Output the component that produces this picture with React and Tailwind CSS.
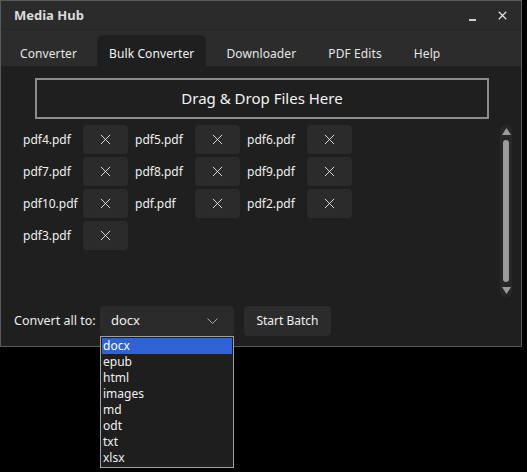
import React, { useState } from 'react';

const FILES = [
  'pdf4.pdf', 'pdf5.pdf', 'pdf6.pdf',
  'pdf7.pdf', 'pdf8.pdf', 'pdf9.pdf',
  'pdf10.pdf', 'pdf.pdf', 'pdf2.pdf',
  'pdf3.pdf',
];

const TABS = ['Converter', 'Bulk Converter', 'Downloader', 'PDF Edits', 'Help'];
const FORMATS = ['docx', 'epub', 'html', 'images', 'md', 'odt', 'txt', 'xlsx'];

const font = { fontFamily: '"Noto Sans", "Open Sans", sans-serif' };

const XIcon = ({ size = 12, stroke = 1 }) => (
  <svg width={size} height={size} viewBox="0 0 12 12">
    <path d="M1 1L11 11M11 1L1 11" stroke="#e8e8e8" strokeWidth={stroke} fill="none" />
  </svg>
);

const App = () => {
  const [files, setFiles] = useState(FILES);
  const [format, setFormat] = useState('docx');
  const [activeTab, setActiveTab] = useState('Bulk Converter');

  return (
    <div className="w-[527px] h-[472px] bg-black relative overflow-hidden text-[#ececec]" style={font}>
      {/* Window frame */}
      <div className="w-[522px] h-[347px] border border-[#5a5a5a] bg-[#1f1f1f] flex flex-col">
        {/* Title bar */}
        <div className="h-[28px] bg-[#2b2b2b] flex items-center pl-[13px] pr-[14px] shrink-0">
          <span className="text-[13px] font-bold text-[#dcdcdc] mt-[2px]">Media Hub</span>
          <div className="ml-auto flex items-center gap-[22px]">
            <div className="w-[7px] h-[2px] bg-[#cfcfcf] mt-[9px]" />
            <XIcon size={9} stroke={1.5} />
          </div>
        </div>

        {/* Tab strip */}
        <div className="h-[37px] bg-[#2c2c2c] border-t border-[#262626] flex items-end pl-[3px] shrink-0">
          {TABS.map(tab => (
            <button
              key={tab}
              onClick={() => setActiveTab(tab)}
              className={`h-[31px] pt-[6px] text-[12px] tracking-[0.1px] rounded-t-[6px] ${
                activeTab === tab ? 'bg-[#1f1f1f] text-[#f2f2f2] mx-[4px] px-[12px]' : 'px-[16px] text-[#e6e6e6]'
              }`}
            >
              {tab}
            </button>
          ))}
        </div>

        {/* Tab body */}
        <div className="flex-1 flex flex-col pt-[12px] pl-[2px]">
          <div className="mx-[32px] h-[41px] border-2 border-[#8c8c8c] flex items-center justify-center text-[15px] text-[#f4f4f4]">
            Drag &amp; Drop Files Here
          </div>

          <div className="flex mt-[6px] pl-[20px] pr-[9px] h-[174px]">
            {/* File list */}
            <div className="flex-1 grid grid-cols-[112px_112px_112px] auto-rows-[29px] gap-y-[3px] content-start">
              {files.map(name => (
                <div key={name} className="flex items-center">
                  <span className="w-[60px] text-[12px] text-[#f0f0f0]">{name}</span>
                  <button
                    onClick={() => setFiles(prev => prev.filter(f => f !== name))}
                    className="w-[45px] h-[29px] rounded-[4px] bg-[#2b2b2b] flex items-center justify-center"
                  >
                    <XIcon size={11} />
                  </button>
                </div>
              ))}
            </div>

            {/* Scrollbar */}
            <div className="w-[12px] h-[172px] rounded-full bg-[#282828] flex flex-col items-center py-[3px]">
              <svg width="9" height="7" viewBox="0 0 9 7"><path d="M4.5 0L9 7H0Z" fill="#9c9c9c" /></svg>
              <div className="w-[6px] flex-1 my-[5px] rounded-full bg-[#9c9c9c]" />
              <svg width="9" height="7" viewBox="0 0 9 7"><path d="M0 0H9L4.5 7Z" fill="#9c9c9c" /></svg>
            </div>
          </div>

          {/* Batch controls */}
          <div className="flex items-center mt-[7px] pl-[11px]">
            <span className="text-[12.5px] text-[#ececec] w-[86px]">Convert all to:</span>
            <div className="w-[134px] h-[30px] rounded-[4px] bg-[#2a2a2a] flex items-center pl-[11px] pr-[16px]">
              <span className="text-[13px] text-[#f0f0f0]">{format}</span>
              <svg className="ml-auto" width="11" height="6" viewBox="0 0 11 6">
                <path d="M0.5 0.5L5.5 5.5L10.5 0.5" stroke="#a8a8a8" strokeWidth="1" fill="none" />
              </svg>
            </div>
            <button className="ml-[10px] w-[87px] h-[30px] rounded-[4px] bg-[#2b2b2b] text-[12px] text-[#f0f0f0]">
              Start Batch
            </button>
          </div>
        </div>
      </div>

      {/* Open format list */}
      <div className="absolute left-[100px] top-[336px] w-[134px] h-[132px] border border-[#a0a0a0] bg-[#1e1e1e] p-[1px]">
        {FORMATS.map(f => (
          <div
            key={f}
            onClick={() => setFormat(f)}
            className={`h-[16px] leading-[16px] pl-[1px] text-[12px] ${
              f === format ? 'bg-[#2f63d4] text-white' : 'text-[#f0f0f0]'
            }`}
          >
            {f}
          </div>
        ))}
      </div>
    </div>
  );
};

export default App;
